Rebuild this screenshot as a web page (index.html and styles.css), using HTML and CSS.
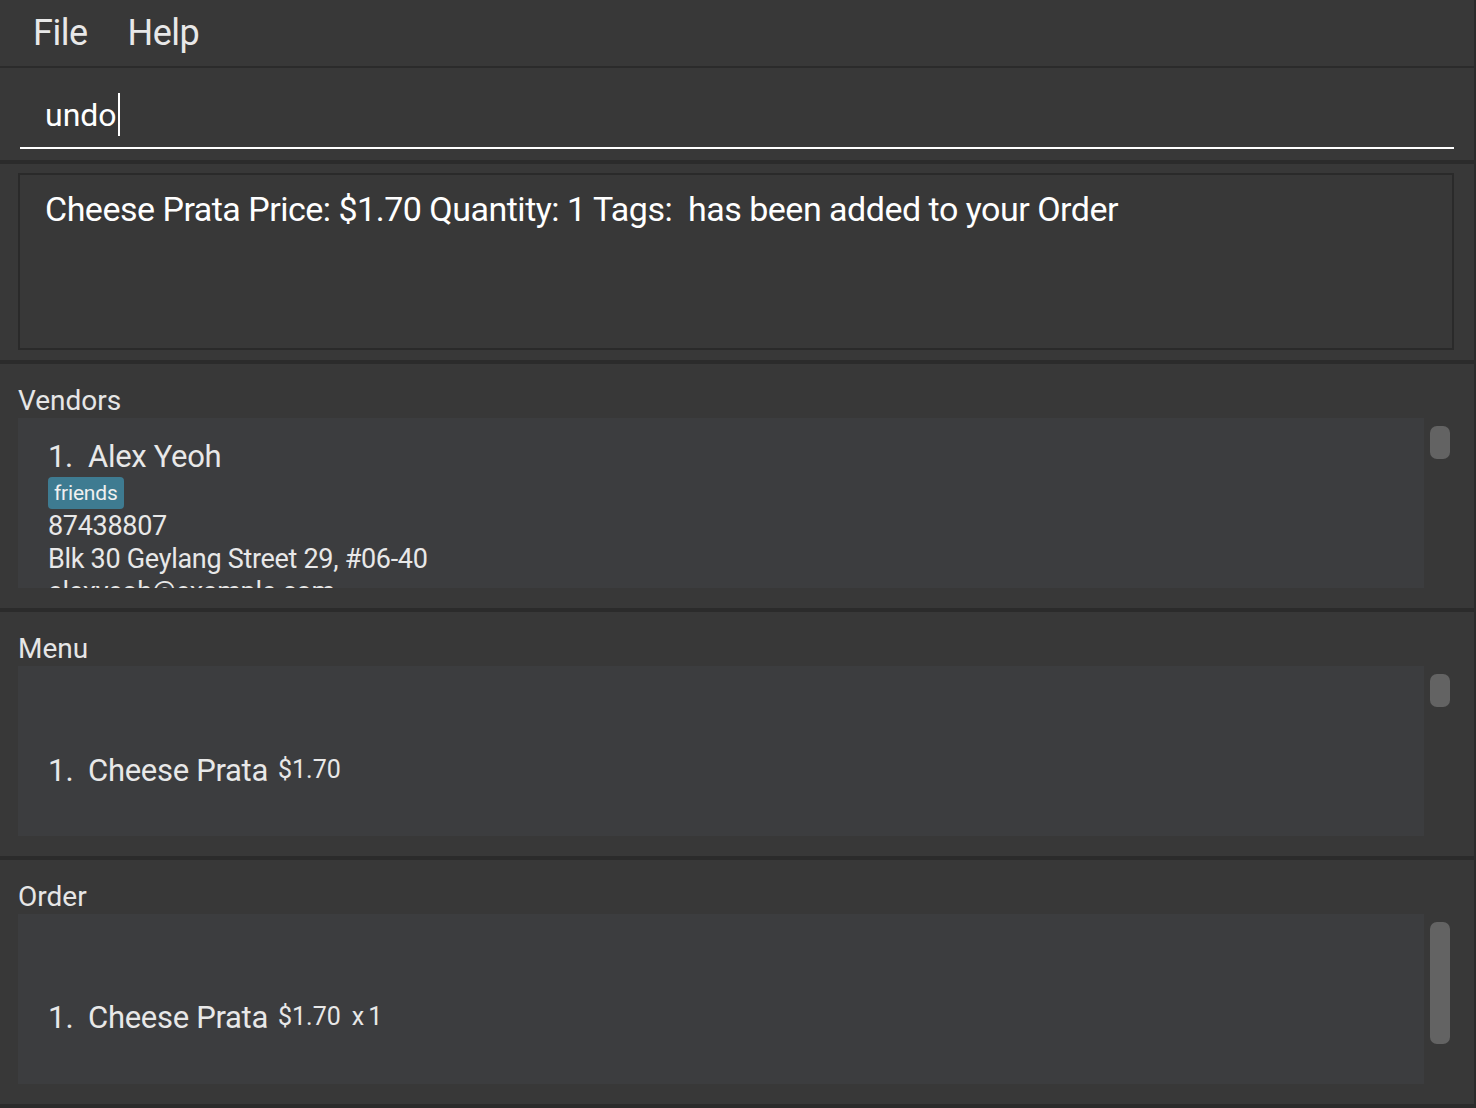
FILE: index.html
```html
<!DOCTYPE html>
<html>
<head>
<meta charset="utf-8">
<link rel="stylesheet" href="styles.css">
</head>
<body>
<div class="app">
  <div class="menubar">
    <span class="menu-item">File</span>
    <span class="menu-item">Help</span>
  </div>
  <div class="command">
    <div class="command-field"><span class="command-text">undo</span><span class="caret"></span></div>
  </div>
  <div class="result">
    <div class="result-box">Cheese Prata Price: $1.70 Quantity: 1 Tags:&nbsp; has been added to your Order</div>
  </div>
  <div class="pane">
    <div class="pane-label">Vendors</div>
    <div class="pane-body">
      <div class="list vendor-list">
        <div class="vendor-card">
          <div class="vendor-name"><span class="idx">1.</span><span>Alex Yeoh</span></div>
          <div class="tags"><span class="tag">friends</span></div>
          <div class="vendor-line">87438807</div>
          <div class="vendor-line">Blk 30 Geylang Street 29, #06-40</div>
          <div class="vendor-line">alexyeoh@example.com</div>
        </div>
      </div>
      <div class="scroll"><div class="thumb thumb-short"></div></div>
    </div>
  </div>
  <div class="pane">
    <div class="pane-label">Menu</div>
    <div class="pane-body">
      <div class="list item-list">
        <div class="item-row"><span class="idx">1.</span><span class="item-name">Cheese Prata</span><span class="item-price">$1.70</span></div>
      </div>
      <div class="scroll"><div class="thumb thumb-short"></div></div>
    </div>
  </div>
  <div class="pane pane-last">
    <div class="pane-label">Order</div>
    <div class="pane-body">
      <div class="list item-list order-list">
        <div class="item-row"><span class="idx">1.</span><span class="item-name">Cheese Prata</span><span class="item-price">$1.70</span><span class="item-qty">x1</span></div>
      </div>
      <div class="scroll"><div class="thumb thumb-long"></div></div>
    </div>
  </div>
</div>
</body>
</html>
```

FILE: styles.css
```css
html, body {
  margin: 0;
  padding: 0;
  background: #383838;
}
body {
  font-family: Roboto, "Liberation Sans", sans-serif;
  color: #ffffff;
  width: 1476px;
  height: 1108px;
  overflow: hidden;
}
.app {
  width: 1474px;
  height: 1108px;
  border-right: 2px solid #2b2b2b;
  display: flex;
  flex-direction: column;
}
.menubar {
  height: 66px;
  border-bottom: 2px solid #2b2b2b;
  display: flex;
  align-items: center;
  padding-left: 33px;
  gap: 40px;
}
.menu-item {
  font-size: 36px;
  color: #e8e8e8;
  line-height: 66px;
  letter-spacing: -0.5px;
}
.command {
  height: 92px;
  padding: 0 20px;
  border-bottom: 4px solid #2b2b2b;
}
.command-field {
  height: 81px;
  border-bottom: 2px solid #ffffff;
  display: flex;
  align-items: center;
  padding-left: 25px;
  padding-top: 14px;
  box-sizing: border-box;
}
.command-text {
  font-size: 32px;
  color: #ffffff;
  line-height: 44px;
}
.caret {
  display: inline-block;
  width: 2px;
  height: 43px;
  background: #ffffff;
  margin-left: 1px;
}
.result {
  height: 200px;
  padding: 9px 20px 10px 18px;
  box-sizing: border-box;
  border-bottom: 4px solid #2b2b2b;
}
.result-box {
  height: 177px;
  box-sizing: border-box;
  border: 2px solid #2a2a2a;
  padding: 12px 25px;
  font-size: 34px;
  line-height: 44px;
  letter-spacing: -0.5px;
  color: #ffffff;
}
.pane {
  height: 248px;
  box-sizing: border-box;
  border-bottom: 4px solid #2b2b2b;
  padding: 20px 0 0 18px;
}
.pane-label {
  font-size: 28px;
  line-height: 34px;
  color: #e6e6e6;
}
.pane-body {
  display: flex;
}
.list {
  width: 1406px;
  height: 170px;
  background: #3c3d3f;
  overflow: hidden;
  box-sizing: border-box;
}
.scroll {
  width: 20px;
  margin-left: 6px;
  padding-top: 8px;
}
.thumb {
  width: 20px;
  background: #636363;
  border-radius: 7px;
}
.thumb-short { height: 33px; }
.thumb-long { height: 122px; }

.vendor-list {
  padding: 20px 0 0 30px;
  color: #e8e8e8;
}
.vendor-name {
  font-size: 31px;
  line-height: 38px;
  letter-spacing: -0.3px;
  display: flex;
}
.idx {
  display: inline-block;
  width: 40px;
}
.tags {
  margin-top: 0px;
  height: 34px;
  display: flex;
  align-items: center;
}
.tag {
  background: #3e7b91;
  border-radius: 4px;
  font-size: 21px;
  line-height: 32px;
  padding: 0 6px;
  color: #f0f0f0;
  letter-spacing: -0.2px;
}
.vendor-line {
  font-size: 27px;
  line-height: 33px;
  letter-spacing: -0.3px;
}
.item-list {
  padding: 84px 0 0 30px;
  color: #e8e8e8;
}
.order-list {
  padding-top: 83px;
}
.item-row {
  display: flex;
  align-items: baseline;
}
.item-row .idx {
  font-size: 31px;
}
.item-name {
  font-size: 31px;
  line-height: 42px;
  letter-spacing: -0.3px;
}
.item-price {
  font-size: 25px;
  margin-left: 10px;
  position: relative;
  top: -3px;
}
.item-qty {
  font-size: 25px;
  margin-left: 11px;
  letter-spacing: 4px;
  position: relative;
  top: -3px;
}
```
